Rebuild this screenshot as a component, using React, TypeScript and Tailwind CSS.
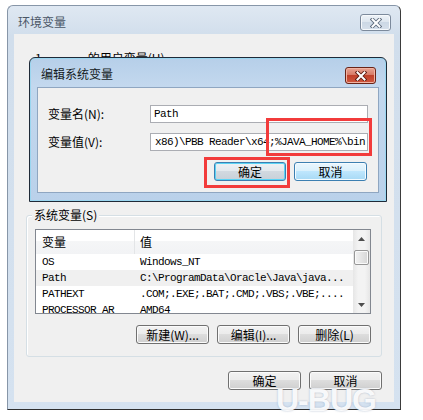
import React from 'react';

const cjk = "font-['Noto_Sans_CJK_SC',sans-serif]";
const mono = "font-['Liberation_Mono','Noto_Sans_CJK_SC',monospace] text-[11px] tracking-[-0.6px]";

type Variant = 'normal' | 'default' | 'hover';

const looks: Record<Variant, string> = {
  normal:
    'border-[#707070] bg-[linear-gradient(#f2f2f2_0%,#ebebeb_49%,#dddddd_50%,#cfcfcf_100%)] shadow-[inset_0_0_0_1px_#fbfbfb]',
  default:
    'border-[#3c7fb1] bg-[linear-gradient(#eef1f4_0%,#e3e8ed_49%,#d2d9e0_50%,#c8d0d8_100%)] shadow-[inset_0_0_0_1px_#5ad3f5]',
  hover:
    'border-[#3c7fb1] bg-[linear-gradient(#eaf6fd_0%,#d9f0fc_49%,#bee6fd_50%,#a7d9f5_100%)] shadow-[inset_0_0_0_1px_#f4fbff]',
};

const WinButton = ({
  children,
  variant = 'normal',
  className = '',
}: {
  children: React.ReactNode;
  variant?: Variant;
  className?: string;
}) => (
  <div
    className={`flex items-center justify-center rounded-[3px] border text-[12px] leading-none text-black ${looks[variant]} ${className}`}
  >
    {children}
  </div>
);

// the white X with a dark outline used on both caption buttons
const CloseGlyph = ({ outline }: { outline: string }) => (
  <svg width="12" height="10" viewBox="0 0 12 10">
    <path d="M2.5 1.5 L9.5 8.5 M9.5 1.5 L2.5 8.5" stroke={outline} strokeWidth="3.8" strokeLinecap="square" />
    <path d="M2.5 1.5 L9.5 8.5 M9.5 1.5 L2.5 8.5" stroke="#ffffff" strokeWidth="2" strokeLinecap="square" />
  </svg>
);

const rows = [
  { name: 'OS', value: 'Windows_NT' },
  { name: 'Path', value: 'C:\\ProgramData\\Oracle\\Java\\java...', selected: true },
  { name: 'PATHEXT', value: '.COM;.EXE;.BAT;.CMD;.VBS;.VBE;....' },
  { name: 'PROCESSOR_AR', value: 'AMD64' },
];

const VarList = () => (
  <div className="flex h-[85px] w-[336px] overflow-hidden border border-[#828790] bg-white">
    <div className="flex w-[317px] flex-col">
      <div className="flex h-[24px] shrink-0 bg-[linear-gradient(#ffffff_0%,#ffffff_45%,#f5f6f7_46%,#f2f3f5_100%)] text-[12px] text-black">
        <div className="flex w-[99px] items-center border-r border-[#e3e5e7] pl-[6px]">变量</div>
        <div className="flex items-center pl-[5px]">值</div>
      </div>
      {rows.map((r) => (
        <div
          key={r.name}
          className={`flex h-[16px] shrink-0 items-center whitespace-nowrap text-black ${mono} ${r.selected ? 'bg-[#f0f0f0]' : ''}`}
        >
          <div className="w-[99px] pl-[6px]">{r.name}</div>
          <div className="pl-[5px]">{r.value}</div>
        </div>
      ))}
    </div>
    <div className="flex w-[17px] flex-col items-center bg-[linear-gradient(90deg,#e6e6e6,#f3f3f3_30%,#f3f3f3_70%,#e6e6e6)]">
      <div className="flex h-[17px] items-center justify-center">
        <svg width="7" height="4" viewBox="0 0 7 4">
          <path d="M0 4 L3.5 0 L7 4 Z" fill="#4d4d4d" />
        </svg>
      </div>
      <div className="mt-[3px] h-[15px] w-[15px] rounded-[2px] border border-[#979797] bg-[linear-gradient(90deg,#f2f2f2,#e4e4e4_50%,#d6d6d6)] shadow-[inset_0_0_0_1px_#fafafa]" />
      <div className="mt-auto flex h-[17px] items-center justify-center">
        <svg width="7" height="4" viewBox="0 0 7 4">
          <path d="M0 0 L7 0 L3.5 4 Z" fill="#4d4d4d" />
        </svg>
      </div>
    </div>
  </div>
);

const EditDialog = () => (
  <div className="absolute left-[29px] top-[57px] flex h-[145px] w-[358px] flex-col rounded-t-[6px] border border-[#1f2a38] bg-[linear-gradient(#b6cfe9,#c3d8ee_28px,#bad1ea)] shadow-[inset_0_0_0_1px_#9ad6f0]">
    <div className="flex h-[29px] shrink-0 items-start justify-between pl-[11px] pr-[10px]">
      <span className={`${cjk} mt-[10px] text-[12px] leading-none text-[#141a22]`}>编辑系统变量</span>
      <div className="mt-[9px] flex h-[17px] w-[31px] items-center justify-center rounded-[3px] border border-[#6a2417] bg-[linear-gradient(#e8a493_0%,#d77a66_45%,#c0402a_50%,#d0583e_100%)] shadow-[inset_0_0_0_1px_#f1b3a3]">
        <CloseGlyph outline="#5a1a10" />
      </div>
    </div>
    <div className={`mx-[7px] flex h-[106px] flex-col border border-[#8fa6c1] bg-[#f0f0f0] ${cjk}`}>
      <div className="mt-[17px] flex items-center">
        <span className="w-[112px] pl-[10px] text-[12px] text-black">变量名(N):</span>
        <div className={`flex h-[18px] w-[218px] items-center border border-[#abadb3] bg-white pl-[3px] text-black ${mono}`}>
          Path
        </div>
      </div>
      <div className="mt-[10px] flex items-center">
        <span className="w-[112px] pl-[10px] text-[12px] text-black">变量值(V):</span>
        <div
          className={`flex h-[18px] w-[218px] items-center justify-end whitespace-nowrap border border-[#abadb3] bg-white pr-[2px] text-black ${mono}`}
        >
          x86)\PBB Reader\x64;%JAVA_HOME%\bin
        </div>
      </div>
      <div className="mt-[11px] flex justify-end gap-[8px] pr-[11px]">
        <WinButton variant="default" className="h-[19px] w-[72px]">
          确定
        </WinButton>
        <WinButton variant="hover" className="h-[19px] w-[73px]">
          取消
        </WinButton>
      </div>
    </div>
  </div>
);

export default function App() {
  return (
    <div className={`relative h-[420px] w-[423px] overflow-hidden bg-white ${cjk}`}>
      {/* 环境变量 window */}
      <div className="ml-[7px] mt-[5px] flex h-[405px] w-[394px] flex-col rounded-t-[6px] border border-[#8796a8] border-b-[#2f2f2f] border-r-[#3b3b3b] bg-[linear-gradient(#dfe8f2,#d1deec_30px,#d5e2f0)]">
        <div className="flex h-[28px] shrink-0 items-start justify-between pl-[10px] pr-[9px]">
          <span className="mt-[10px] text-[12px] leading-none text-[#4a5666]">环境变量</span>
          <div className="mt-[8px] flex h-[17px] w-[31px] items-center justify-center rounded-[3px] border border-[#7c8a9c] bg-[linear-gradient(#eef3f8_0%,#dde6ef_45%,#ccd8e5_50%,#d6e0eb_100%)] shadow-[inset_0_0_0_1px_#f6f9fc]">
            <CloseGlyph outline="#5d6b7d" />
          </div>
        </div>
        <div className="mx-[6px] flex h-[368px] flex-col bg-[#f0f0f0]">
          <div className="mt-[16px] flex h-[15px] items-center text-[12px] text-black">
            <span className="pl-[21px]">1</span>
            <span className="pl-[46px]">的用户变量(U)</span>
          </div>

          {/* 系统变量 group */}
          <div className="relative mx-[12px] mt-[150px] flex h-[142px] flex-col rounded-[3px] border border-[#d5dfe5] shadow-[inset_1px_1px_0_#ffffff]">
            <span className="absolute -top-[9px] left-[5px] bg-[#f0f0f0] px-[2px] text-[12px] leading-[16px] text-black">
              系统变量(S)
            </span>
            <div className="ml-[8px] mt-[13px]">
              <VarList />
            </div>
            <div className="mt-[11px] flex justify-end gap-[8px] pr-[10px]">
              <WinButton className="h-[19px] w-[73px]">新建(W)...</WinButton>
              <WinButton className="h-[19px] w-[73px]">编辑(I)...</WinButton>
              <WinButton className="h-[19px] w-[73px]">删除(L)</WinButton>
            </div>
          </div>

          <div className="mt-[14px] flex justify-end gap-[8px] pr-[12px]">
            <WinButton className="h-[19px] w-[73px]">确定</WinButton>
            <WinButton className="h-[19px] w-[73px]">取消</WinButton>
          </div>
        </div>
      </div>

      <EditDialog />

      {/* red annotation boxes */}
      <div className="absolute left-[266px] top-[118px] h-[38px] w-[106px] border-[3px] border-[#f23b3b]" />
      <div className="absolute left-[204px] top-[157px] h-[31px] w-[86px] border-[3px] border-[#f23b3b]" />

      {/* watermark */}
      <div className="absolute left-[276px] top-[384px] font-['Liberation_Sans',sans-serif] text-[32px] font-bold leading-none tracking-[-1px] text-white/90 [text-shadow:0_0_2px_rgba(120,140,170,0.6)]">
        U-BUG
      </div>
    </div>
  );
}
